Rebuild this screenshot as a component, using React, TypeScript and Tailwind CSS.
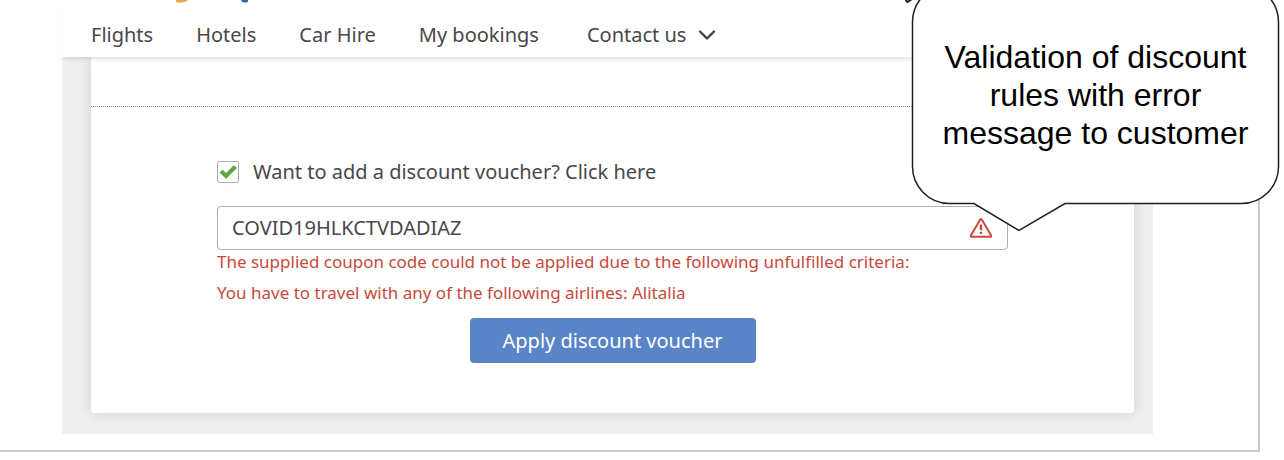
import { useState } from "react";

const links = [
  { label: "Flights", gap: "mr-[43px]" },
  { label: "Hotels", gap: "mr-[43px]" },
  { label: "Car Hire", gap: "mr-[43px]" },
  { label: "My bookings", gap: "mr-12" },
];

function Logo() {
  return (
    <svg className="block h-1 w-20" viewBox="0 0 80 4" aria-hidden="true">
      <path d="M3 0H15Q12 2.8 8 2.8Q5 2.8 3 2Z" fill="#eba54c" />
      <path d="M68 0H75V1Q75 2.600 73 2.600H71.500Q69 2.500 68 0Z" fill="#355fa8" />
    </svg>
  );
}

function NavBar() {
  return (
    <header className="relative z-10 h-[57px] bg-white shadow-[0_4px_4px_-2px_rgba(0,0,0,0.12)]">
      <div className="pl-[111px]">
        <Logo />
      </div>
      <nav className="flex items-center pt-4 pl-[29px] text-[20px] leading-[30px] whitespace-nowrap text-[#484848]">
        {links.map((link) => (
          <a key={link.label} href="#" className={link.gap}>
            {link.label}
          </a>
        ))}
        <button type="button" className="flex items-center gap-3">
          Contact us
          <svg className="h-3 w-[19px]" viewBox="0 0 19 12" fill="none" aria-hidden="true">
            <path
              d="M2 2.500L9 9.500L16 2.500"
              stroke="#404040"
              strokeWidth="2.4"
              strokeLinecap="round"
              strokeLinejoin="round"
            />
          </svg>
        </button>
      </nav>
    </header>
  );
}

function WarningIcon() {
  return (
    <svg className="h-[22px] w-6 shrink-0" viewBox="0 0 24 22" fill="none" aria-hidden="true">
      <path
        d="M11.1 2.7Q12 1.3 12.9 2.7L22 18.2Q22.6 19.8 21 19.8H3Q1.400 19.8 2 18.2Z"
        stroke="#c8493c"
        strokeWidth="2"
        strokeLinejoin="round"
      />
      <path d="M12 7.500V13.200M12 14.800V17" stroke="#c8493c" strokeWidth="2.400" />
    </svg>
  );
}

function VoucherForm() {
  const [open, setOpen] = useState(true);
  const [code, setCode] = useState("COVID19HLKCTVDADIAZ");
  return (
    <form
      className="mx-[126px] flex flex-col pt-[51px] pb-[50px]"
      onSubmit={(event) => event.preventDefault()}
    >
      <label className="flex items-center gap-[14px] text-[20px] leading-7 whitespace-nowrap text-[#484848]">
        <span className="grid h-[22px] w-[22px] shrink-0">
          <input
            type="checkbox"
            checked={open}
            onChange={(event) => setOpen(event.target.checked)}
            className="peer col-start-1 row-start-1 appearance-none rounded-[2px] border border-[#b0b0b0] bg-white"
          />
          <svg
            className="pointer-events-none invisible col-start-1 row-start-1 h-[22px] w-[22px] peer-checked:visible"
            viewBox="0 0 22 22"
            aria-hidden="true"
          >
            <path
              d="M3 11.500L5.500 9L9 12.400L17 4.500L19.500 7L9 17.500Z"
              fill="#5ea53c"
              stroke="#5ea53c"
              strokeWidth="0.800"
              strokeLinejoin="round"
            />
          </svg>
        </span>
        Want to add a discount voucher? Click here
      </label>
      <div className="mt-5 flex h-11 items-center rounded border border-[#b0b0b0] bg-white pr-[14px] pl-[14px]">
        <input
          type="text"
          aria-label="Voucher code"
          value={code}
          onChange={(event) => setCode(event.target.value)}
          className="min-w-0 flex-1 bg-transparent text-[20px] leading-7 text-[#484848] outline-none"
        />
        <WarningIcon />
      </div>
      <div role="alert" className="flex flex-col gap-[7px] text-[17px] leading-6 text-[#c8493c]">
        <p>The supplied coupon code could not be applied due to the following unfulfilled criteria:</p>
        <p>You have to travel with any of the following airlines: Alitalia</p>
      </div>
      <button
        type="submit"
        className="mt-[13px] h-[45px] w-[286px] self-center rounded bg-[#5985c8] text-[20px] leading-7 text-white"
      >
        Apply discount voucher
      </button>
    </form>
  );
}

function Callout() {
  return (
    <aside className="absolute top-0 right-[4px] z-20 w-[376px]">
      <svg className="block h-[232px] w-[376px]" viewBox="0 0 376 232" fill="none" aria-hidden="true">
        <path d="M1.500 0L3.500 2L8 -1" stroke="#1f1f1f" strokeWidth="2" />
        <path
          d="M45.500 -15H337.500A37 37 0 0 1 374.500 22V166A37 37 0 0 1 337.500 203.500H161L115 230.500L70 203.500H45.500A37 37 0 0 1 8.500 166V22A37 37 0 0 1 45.500 -15Z"
          fill="white"
          stroke="#1f1f1f"
          strokeWidth="1.500"
        />
      </svg>
      <p className="absolute top-[38px] right-0 left-[7px] px-5 text-center font-['Liberation_Sans',sans-serif] text-[32px] leading-[38px] text-black">
        Validation of discount rules with error message to customer
      </p>
    </aside>
  );
}

export default function App() {
  return (
    <div className="relative overflow-hidden bg-white pb-2 font-['Noto_Sans',sans-serif]">
      <div className="mr-6 border-r-2 border-b-2 border-[#cbcbcb] pr-[105px] pb-4 pl-[62px]">
        <NavBar />
        <main className="bg-[#efefef] pr-[19px] pb-[21px] pl-[29px]">
          <div className="rounded-b bg-white shadow-[0_0_14px_rgba(0,0,0,0.13)]">
            <div className="h-[50px] border-b border-dotted border-[#8a8a8a]" />
            <VoucherForm />
          </div>
        </main>
      </div>
      <Callout />
    </div>
  );
}
